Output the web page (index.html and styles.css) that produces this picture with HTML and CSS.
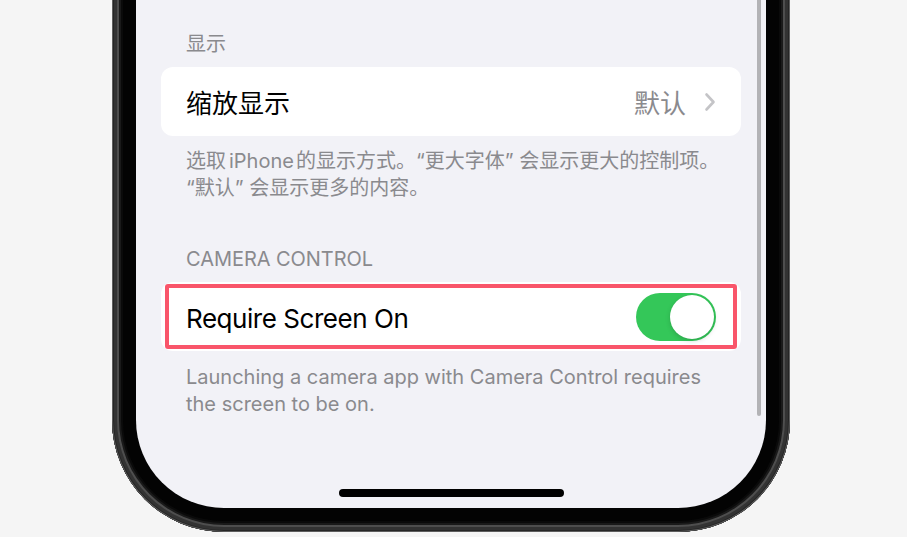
FILE: index.html
```html
<!DOCTYPE html>
<html lang="zh-CN">
<head>
<meta charset="utf-8">
<title>设置</title>
<link rel="stylesheet" href="styles.css">
</head>
<body>
<div class="stage">
  <div class="phone">
    <div class="screen">
      <div class="scrollbar"></div>
      <div class="group-header cjk">显示</div>
      <div class="card">
        <div class="row">
          <span class="label cjk">缩放显示</span>
          <span class="value cjk">默认</span>
          <svg class="chevron" width="12" height="20" viewBox="0 0 12 20"><path d="M2.5 2.5 L9.5 10 L2.5 17.5" fill="none" stroke="#c4c4c7" stroke-width="2.6" stroke-linecap="round" stroke-linejoin="round"/></svg>
        </div>
      </div>
      <p class="group-footer cjk nowrap">选取<span class="word">iPhone</span>的显示方式。“更大字体” 会显示更大的控制项。<br>“默认” 会显示更多的内容。</p>

      <div class="group-header second">CAMERA CONTROL</div>
      <div class="card highlighted">
        <div class="row">
          <span class="label latin-label">Require Screen On</span>
          <span class="toggle"><span class="knob"></span></span>
        </div>
        <div class="highlight"></div>
      </div>
      <p class="group-footer latin">Launching a camera app with Camera Control requires<br>the screen to be on.</p>

      <div class="home-indicator"></div>
    </div>
  </div>
</div>
</body>
</html>
```

FILE: styles.css
```css
html, body {
  margin: 0;
  padding: 0;
}

body {
  background: #f5f5f5;
  font-family: "Inter", "Noto Sans CJK SC", sans-serif;
}

.stage {
  height: 537px;
  box-sizing: border-box;
  padding: 0 0 5px 112px;
  display: flex;
  flex-direction: column;
  justify-content: flex-end;
  overflow: hidden;
}

.phone {
  flex: none;
  width: 678px;
  height: 600px;
  box-sizing: border-box;
  padding: 0 24px 24px 24px;
  background: #030303;
  border-radius: 0 0 112px 112px;
  box-shadow:
    inset 0 0 0 1px #5e5e5e,
    inset 0 0 0 2px #262626,
    inset 0 0 0 5px #333333,
    inset 0 0 0 7px #4e4e4e,
    inset 0 0 0 9px #1a1a1a,
    inset 0 0 0 11px #0a0a0a;
  display: flex;
}

.screen {
  position: relative;
  flex: 1;
  background: #f2f2f7;
  border-radius: 0 0 88px 88px;
  padding: 100px 25px 0 25px;
  overflow: hidden;
}

.scrollbar {
  position: absolute;
  right: 5px;
  top: 0;
  width: 4px;
  height: 484px;
  border-radius: 2px;
  background: #b3b3b6;
}

.cjk {
  font-family: "Inter", "Noto Sans CJK SC", sans-serif;
}

.nowrap {
  white-space: nowrap;
}

.word {
  margin: 0 2px 0 3px;
}

.group-header {
  padding: 0 25px;
  font-size: 20px;
  line-height: 24px;
  color: #8a8a8e;
  margin-bottom: 11px;
}

.group-header.second {
  margin-top: 45px;
  letter-spacing: -0.05px;
}

.card {
  position: relative;
  background: #ffffff;
  border-radius: 12px;
  height: 69px;
}

.row {
  height: 100%;
  display: flex;
  align-items: center;
  padding: 0 25px;
}

.label {
  flex: 1;
  font-size: 26px;
  color: #000000;
}

.latin-label {
  letter-spacing: -0.45px;
  padding-top: 3px;
}

.value {
  font-size: 26px;
  color: #8a8a8e;
  margin-right: 18px;
}

.chevron {
  display: block;
}

.group-footer {
  margin: 12px 0 0 0;
  padding: 0 25px;
  font-size: 20px;
  line-height: 27px;
  color: #8a8a8e;
}

.group-footer.latin {
  margin-top: 13px;
}

.toggle {
  position: relative;
  width: 80px;
  height: 48px;
  border-radius: 24px;
  background: #34c759;
  flex: none;
}

.knob {
  position: absolute;
  right: 2px;
  top: 2px;
  width: 44px;
  height: 44px;
  border-radius: 50%;
  background: #ffffff;
  box-shadow: 0 2px 5px rgba(0, 0, 0, 0.15), 0 0 1px rgba(0, 0, 0, 0.1);
}

.highlight {
  position: absolute;
  top: 2px;
  bottom: 2px;
  left: 4px;
  right: 4px;
  border: 4px solid #f9556a;
  border-radius: 3px;
}

.home-indicator {
  position: absolute;
  left: 50%;
  bottom: 11px;
  width: 225px;
  height: 8px;
  margin-left: -112px;
  border-radius: 4px;
  background: #000000;
}
```
